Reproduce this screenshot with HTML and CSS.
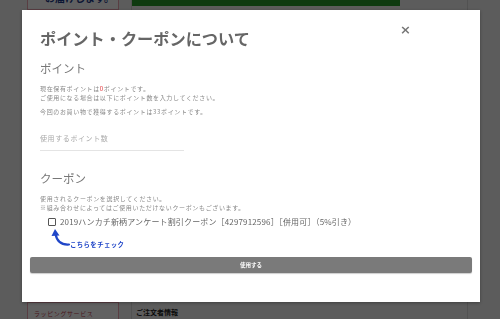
FILE: index.html
```html
<!DOCTYPE html>
<html lang="ja">
<head>
    <meta charset="UTF-8">
    <meta name="viewport" content="width=device-width, initial-scale=1.0">
    <title>ポイント・クーポンについて</title>
    <link rel="stylesheet" href="styles.css">
</head>
<body>
    <div class="page">
        <div class="row top-row">
            <aside class="side-box side-top">
                <span class="side-note">お届けします。</span>
            </aside>
            <div class="main-col">
                <div class="green-bar"></div>
            </div>
        </div>
        <div class="spacer"></div>
        <div class="row bottom-row">
            <aside class="side-box side-bottom">
                <span class="wrap-link">ラッピングサービス</span>
            </aside>
            <div class="main-col">
                <h3 class="order-title">ご注文者情報</h3>
            </div>
        </div>
    </div>

    <div class="overlay"></div>

    <div class="modal">
        <button class="close" type="button">×</button>
        <div class="modal-body">
            <h1 class="modal-title">ポイント・クーポンについて</h1>

            <h2 class="section-title">ポイント</h2>
            <p class="note">現在保有ポイントは<span class="red">0</span>ポイントです。<br>ご使用になる場合は以下にポイント数を入力してください。</p>
            <p class="note">今回のお買い物で獲得するポイントは33ポイントです。</p>
            <input class="point-input" type="text" placeholder="使用するポイント数">

            <h2 class="section-title coupon-title">クーポン</h2>
            <p class="note">使用されるクーポンを選択してください。<br>※組み合わせによってはご使用いただけないクーポンもございます。</p>
            <label class="coupon">
                <span class="check"></span>
                <span>2019ハンカチ新柄アンケート割引クーポン［4297912596］［併用可］（5%引き）</span>
            </label>
            <div class="hint">
                <svg width="20" height="22" viewBox="0 0 20 22">
                    <path d="M19 16.5 C12 17 7 14 5.5 6" fill="none" stroke="#2046c8" stroke-width="2.2" stroke-linecap="round"/>
                    <path d="M5 1 L9.5 7.5 L1.5 8 Z" fill="#2046c8"/>
                </svg>
                <span>こちらをチェック</span>
            </div>
        </div>
        <button class="use-btn" type="button">使用する</button>
    </div>
</body>
</html>
```

FILE: styles.css
```css
body {
    margin: 0;
    font-family: "Noto Sans CJK JP", "Noto Sans", sans-serif;
    background-color: #f2f2f2;
    width: 500px;
    height: 319px;
    overflow: hidden;
}
.page {
    height: 319px;
    display: flex;
    flex-direction: column;
}
.row {
    display: flex;
    padding: 0 32px 0 27px;
    gap: 12px;
}
.top-row {
    height: 10px;
}
.spacer {
    flex: 1;
}
.bottom-row {
    height: 17px;
}
.side-box {
    width: 92px;
    border: 1px solid #e9a3b0;
    background-color: #fff;
    box-sizing: border-box;
    font-size: 6px;
    line-height: 8px;
}
.side-top {
    border-top: none;
    position: relative;
    overflow: hidden;
}
.side-note {
    position: absolute;
    right: 4px;
    top: -9px;
    font-size: 10px;
    line-height: 14px;
    font-weight: bold;
    color: #1d3a8a;
}
.side-bottom {
    border-bottom: none;
    padding: 7px 6px 0;
}
.wrap-link {
    color: #c04050;
    letter-spacing: 0.6px;
}
.main-col {
    flex: 1;
    border-left: 1px solid #d8d8d8;
    border-right: 1px solid #d8d8d8;
}
.green-bar {
    width: 268px;
    height: 6px;
    background-color: #279a2a;
}
.order-title {
    margin: 6px 0 0 4px;
    font-size: 7px;
    line-height: 9px;
    color: #222;
}
.overlay {
    position: fixed;
    inset: 0;
    background-color: rgba(0, 0, 0, 0.62);
}
.modal {
    position: absolute;
    left: 22px;
    top: 10px;
    width: 458px;
    height: 292px;
    background-color: #fff;
    box-shadow: 0 1px 3px rgba(0, 0, 0, 0.3);
    box-sizing: border-box;
    padding: 0 8px;
}
.modal-body {
    padding: 17px 10px 0;
}
.close {
    position: absolute;
    left: 378px;
    top: 13px;
    border: none;
    background: none;
    padding: 0;
    font-family: "DejaVu Sans", sans-serif;
    font-size: 13px;
    font-weight: bold;
    line-height: 14px;
    color: #777;
}
.modal-title {
    margin: 0;
    font-size: 16.2px;
    line-height: 22px;
    font-weight: bold;
    color: #666;
}
.section-title {
    margin: 11px 0 0;
    font-size: 11.5px;
    line-height: 16px;
    font-weight: normal;
    color: #777;
}
.coupon-title {
    margin-top: 19px;
}
.note {
    margin: 9px 0 0;
    font-size: 6px;
    line-height: 8.5px;
    letter-spacing: 0.65px;
    color: #888;
}
.note + .note {
    margin-top: 6px;
}
.red {
    color: #e0262b;
}
.point-input {
    display: block;
    margin-top: 16.5px;
    width: 144px;
    padding: 0 0 7px;
    border: none;
    border-bottom: 1px solid #e4e4e4;
    font-family: inherit;
    font-size: 7px;
    line-height: 10px;
    letter-spacing: 0.6px;
    outline: none;
}
.point-input::placeholder {
    color: #aaa;
}
.coupon {
    display: flex;
    align-items: center;
    gap: 4px;
    margin: 4px 0 0 8px;
    font-size: 8px;
    line-height: 12px;
    letter-spacing: 0.15px;
    color: #666;
}
.check {
    width: 6px;
    height: 6px;
    border: 1px solid #555;
    border-radius: 1px;
}
.hint {
    display: flex;
    align-items: flex-end;
    margin: 0 0 0 10px;
    font-size: 6.4px;
    line-height: 9px;
    font-weight: bold;
    letter-spacing: 0.4px;
    color: #2046c8;
}
.hint span {
    margin-bottom: 1px;
}
.use-btn {
    display: block;
    width: 100%;
    height: 16px;
    margin-top: 7px;
    border: none;
    border-radius: 2px;
    background-color: #7a7a7a;
    box-shadow: 0 1px 1px rgba(0, 0, 0, 0.2);
    color: #fff;
    font-family: inherit;
    font-size: 5.5px;
    font-weight: bold;
}
```
